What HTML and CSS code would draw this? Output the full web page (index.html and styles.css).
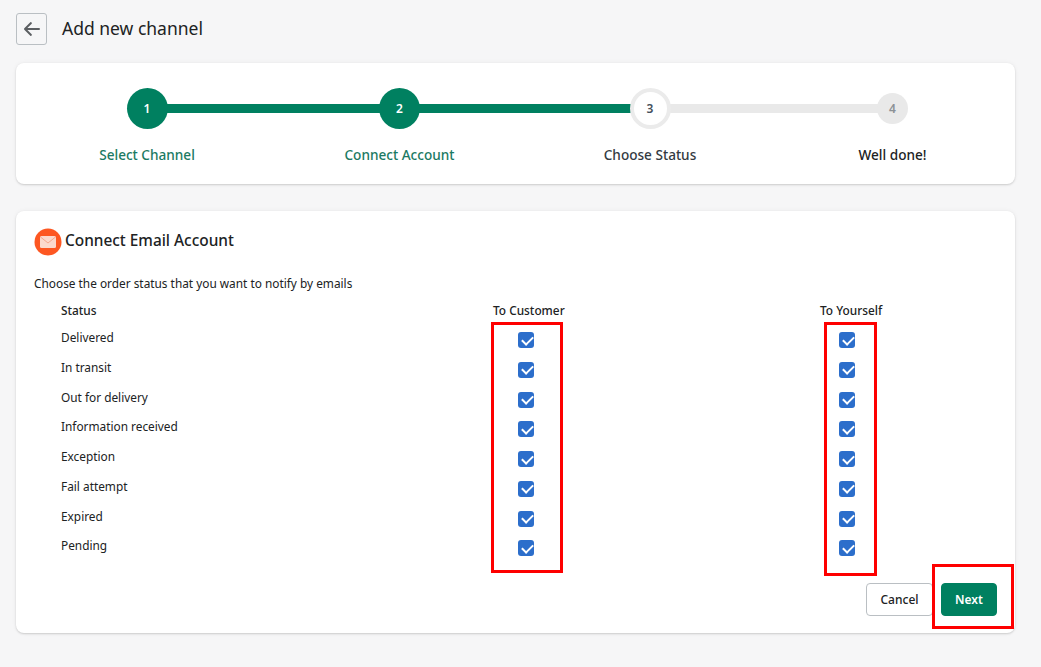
FILE: index.html
```html
<!DOCTYPE html>
<html lang="en">
<head>
<meta charset="utf-8">
<title>Add new channel</title>
<link rel="stylesheet" href="styles.css">
</head>
<body>
<main class="page">
  <header class="head">
    <button class="back" aria-label="Back">
      <svg width="20" height="20" viewBox="0 0 20 20"><path d="M17 9H5.4l4.3-4.3a1 1 0 0 0-1.4-1.4l-6 6a1 1 0 0 0 0 1.4l6 6a1 1 0 0 0 1.4-1.4L5.4 11H17a1 1 0 0 0 0-2z" fill="#5c5f62"/></svg>
    </button>
    <h1>Add new channel</h1>
  </header>

  <section class="card stepper">
    <div class="track done"></div>
    <div class="track todo"></div>
    <div class="step s1"><span class="dot on">1</span><span class="label green">Select Channel</span></div>
    <div class="step s2"><span class="dot on">2</span><span class="label green">Connect Account</span></div>
    <div class="step s3"><span class="dot cur">3</span><span class="label">Choose Status</span></div>
    <div class="step s4"><span class="dot off">4</span><span class="label dark">Well done!</span></div>
  </section>

  <section class="card panel">
    <div class="title">
      <svg class="mail" width="28" height="28" viewBox="0 0 28 28"><circle cx="14" cy="14" r="13.5" fill="#fd5722"/><rect x="6" y="8" width="16" height="12" rx="1.5" fill="#fbd9cd"/><path d="M6.5 9l7.5 6 7.5-6" fill="none" stroke="#f5a78d" stroke-width="1"/></svg>
      <h2>Connect Email Account</h2>
    </div>
    <p class="intro">Choose the order status that you want to notify by emails</p>
    <div class="grid">
      <div class="th">Status</div><div class="th">To Customer</div><div class="th">To Yourself</div>
      <div class="td">Delivered</div><div class="c a"><i class="cb"></i></div><div class="c b"><i class="cb"></i></div>
      <div class="td">In transit</div><div class="c a"><i class="cb"></i></div><div class="c b"><i class="cb"></i></div>
      <div class="td">Out for delivery</div><div class="c a"><i class="cb"></i></div><div class="c b"><i class="cb"></i></div>
      <div class="td">Information received</div><div class="c a"><i class="cb"></i></div><div class="c b"><i class="cb"></i></div>
      <div class="td">Exception</div><div class="c a"><i class="cb"></i></div><div class="c b"><i class="cb"></i></div>
      <div class="td">Fail attempt</div><div class="c a"><i class="cb"></i></div><div class="c b"><i class="cb"></i></div>
      <div class="td">Expired</div><div class="c a"><i class="cb"></i></div><div class="c b"><i class="cb"></i></div>
      <div class="td">Pending</div><div class="c a"><i class="cb"></i></div><div class="c b"><i class="cb"></i></div>
    </div>
    <div class="actions">
      <button class="btn">Cancel</button>
      <button class="btn primary">Next</button>
    </div>
  </section>
</main>
<div class="mark m1"></div>
<div class="mark m2"></div>
<div class="mark m3"></div>
</body>
</html>
```
FILE: styles.css
```css
* { box-sizing: border-box; }
html, body { margin: 0; height: 100%; }
body {
  position: relative;
  background: #f6f6f7;
  color: #202223;
  font-family: "Noto Sans", "Open Sans", sans-serif;
  font-size: 11.85px;
  overflow: hidden;
}
.page { width: 999px; margin-left: 16px; padding-top: 13px; }
.head { display: flex; align-items: center; gap: 15px; height: 32px; }
.back {
  width: 31px; height: 32px; padding: 0;
  display: flex; align-items: center; justify-content: center;
  background: #f6f6f7; border: 1px solid #babfc3; border-radius: 3px;
}
h1 { margin: 0 0 2px; font-size: 17.5px; font-weight: 400; line-height: 28px; }
.card {
  background: #fff; border-radius: 8px;
  box-shadow: 0 0 5px rgba(23,24,24,.05), 0 1px 2px rgba(0,0,0,.15);
}
.stepper { position: relative; display: flex; height: 121px; margin-top: 18px; }
.track { position: absolute; top: 41px; height: 9px; }
.track.done { left: 131px; width: 503px; background: #008060; }
.track.todo { left: 634px; width: 242px; background: #e9e9e9; }
.step { position: relative; display: flex; flex-direction: column; align-items: center; }
.s1 { width: 262px; }
.s2 { width: 243px; }
.s3 { width: 258px; }
.s4 { width: 227px; }
.dot {
  display: flex; align-items: center; justify-content: center;
  width: 41px; height: 41px; margin-top: 25px;
  border-radius: 50%; font-weight: 600; font-size: 12px;
}
.dot.on { background: #008060; color: #fff; }
.dot.cur { background: #fff; border: 4px solid #ebebeb; color: #454f5b; }
.dot.off { width: 31px; height: 31px; margin: 30px 0 5px; background: #e9e9e9; color: #8c9196; }
.label { margin-top: 16px; font-size: 13.6px; font-weight: 500; line-height: 20px; color: #333a42; }
.label.green { color: #1b7a63; }
.label.dark { color: #202223; }
.panel { height: 422px; margin-top: 27px; padding: 17px 18px 0; }
.title { display: flex; align-items: center; gap: 3px; height: 28px; }
.mail { flex: none; }
h2 { margin: 0 0 2px; font-size: 15.4px; font-weight: 500; line-height: 24px; }
.intro { margin: 19px 0 0; line-height: 17px; }
.grid {
  display: grid;
  grid-template-columns: 459px 327px 1fr;
  grid-template-rows: 19px repeat(8, 29.75px);
  margin-top: 9px;
}
.th, .td { padding-left: 27px; }
.th { font-weight: 500; line-height: 18px; }
.th + .th { padding-left: 0; }
.td { padding-top: 8px; line-height: 18px; }
.c { display: flex; align-items: flex-start; padding-top: 12px; }
.c.a { padding-left: 25px; }
.c.b { padding-left: 19px; }
.cb {
  position: relative; display: block; width: 16px; height: 16px;
  background: #2c6ecb; border-radius: 3px;
}
.cb::after {
  content: ""; position: absolute; left: 3.5px; top: 3.5px;
  width: 9px; height: 5px;
  border-left: 2px solid #fff; border-bottom: 2px solid #fff;
  transform: rotate(-45deg);
}
.actions { display: flex; justify-content: flex-end; gap: 8px; margin-top: 25px; }
.btn {
  height: 33px; padding: 0; width: 67px;
  font-family: inherit; font-size: 12px; font-weight: 500; color: #202223;
  background: #fff; border: 1px solid #babfc3; border-radius: 4px;
}
.btn.primary { width: 56px; background: #008060; border-color: #008060; color: #fff; font-weight: 600; }
.mark { position: absolute; border: 3px solid #fe0000; }
.m1 { left: 491px; top: 322px; width: 72px; height: 251px; }
.m2 { left: 824px; top: 322px; width: 53px; height: 254px; }
.m3 { left: 932px; top: 564px; width: 82px; height: 65px; }
```
